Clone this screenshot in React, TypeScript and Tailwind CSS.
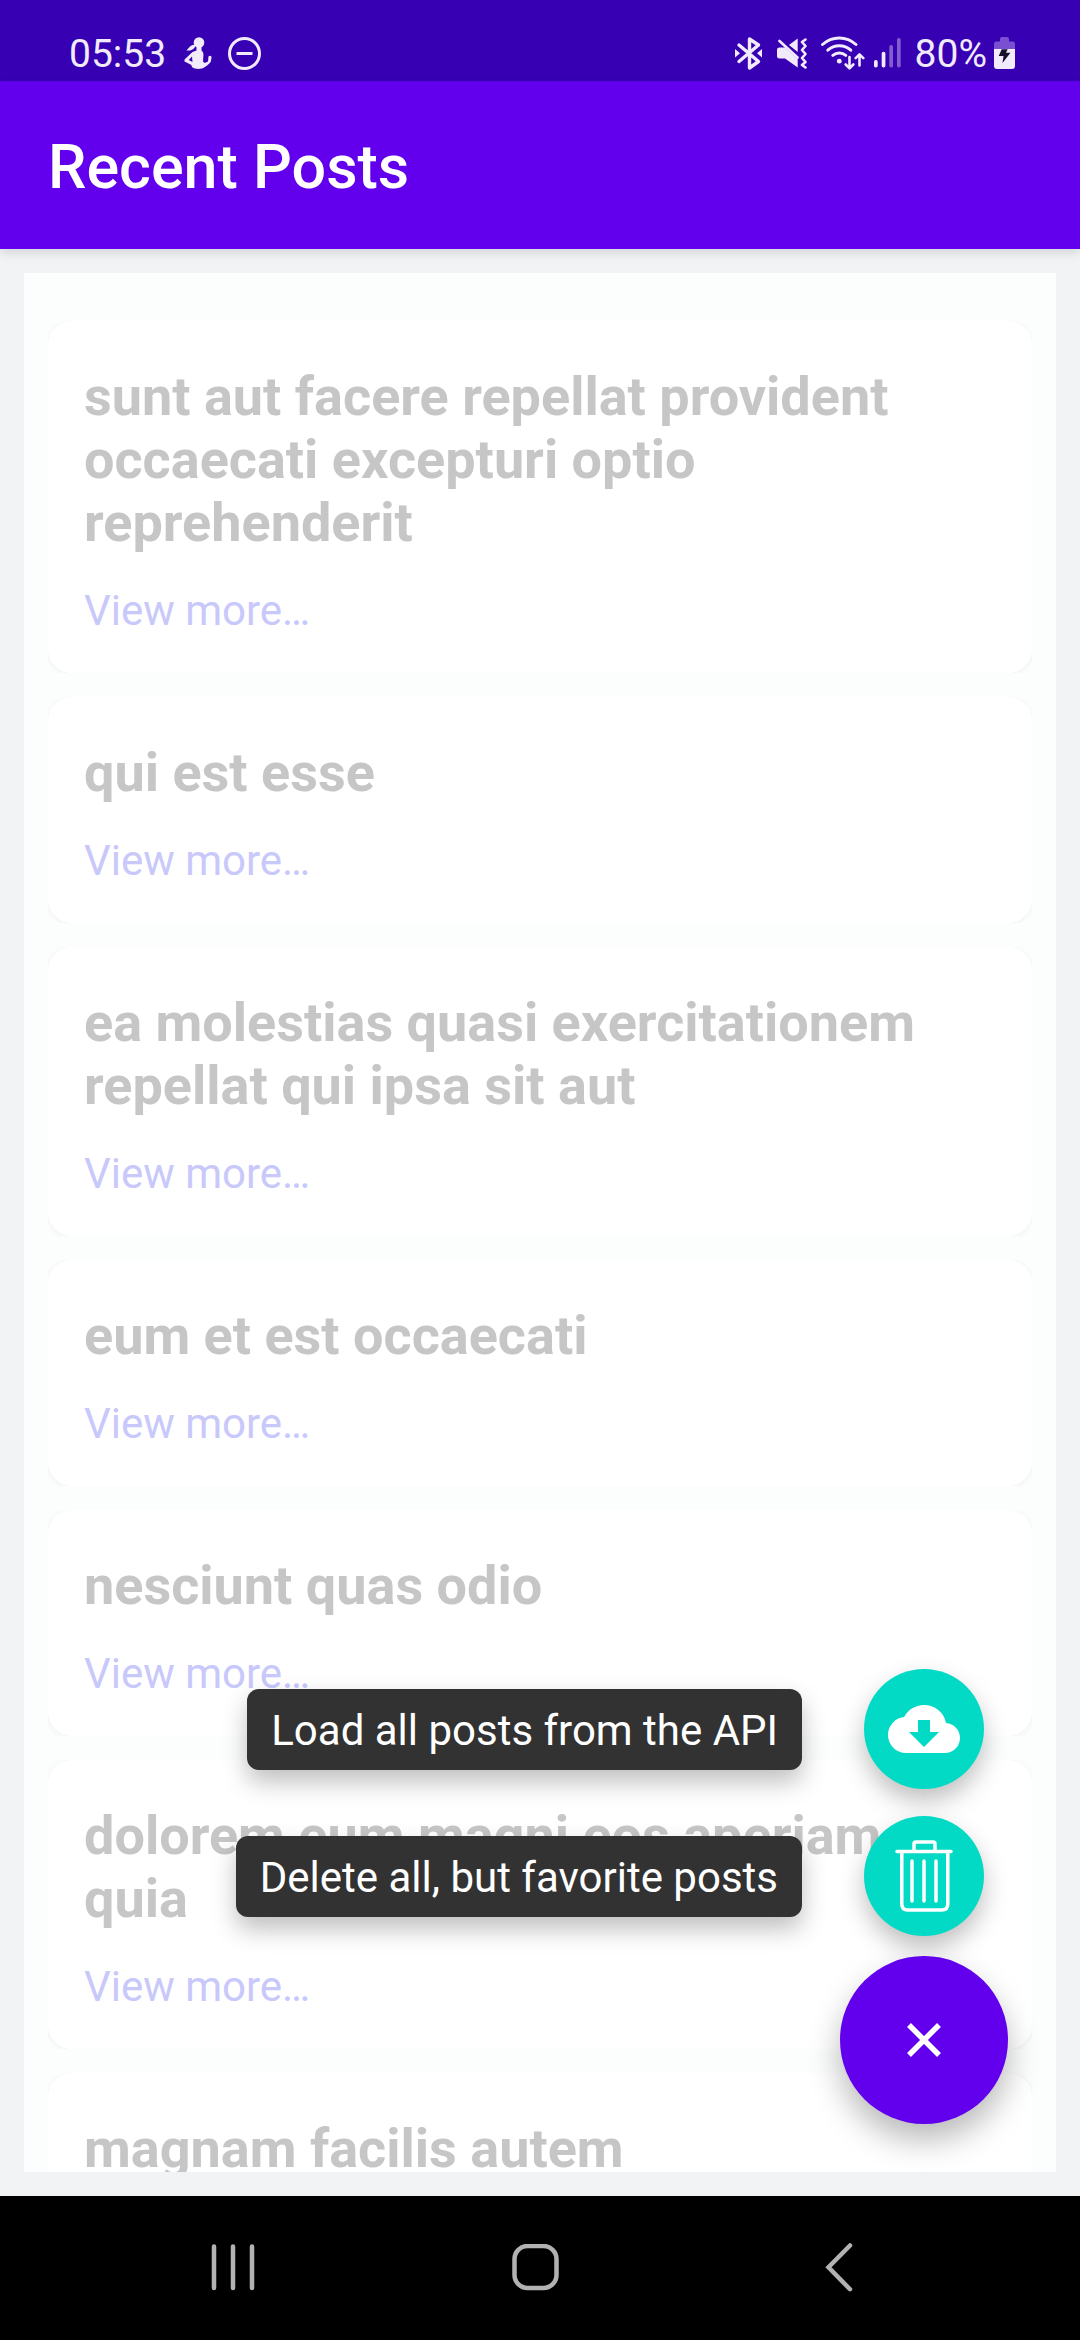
import type { ReactNode } from "react";

const posts = [
  "sunt aut facere repellat provident occaecati excepturi optio reprehenderit",
  "qui est esse",
  "ea molestias quasi exercitationem repellat qui ipsa sit aut",
  "eum et est occaecati",
  "nesciunt quas odio",
  "dolorem eum magni eos aperiam quia",
  "magnam facilis autem",
];

function StatusBar() {
  return (
    <div className="flex h-[81px] shrink-0 items-end justify-between bg-[#3700b3] pr-[65px] pb-[5px] pl-[69px] text-[39px] leading-[44px] text-[#f1ebfb]">
      <div className="flex items-center">
        <span>05:53</span>
        <svg className="ml-[18px] h-9 w-7" viewBox="0 0 28 36" fill="currentColor" aria-hidden="true">
          <circle cx="15" cy="6.500" r="5.300" />
          <path d="M11 8.500C7.500 8.700 5.500 10.500 2.500 14.500c3.500.5 6.500-.5 8.500-3.500z" />
          <path
            fillRule="evenodd"
            d="M12.500 10h5v4.500c1.800 1.300 2.300 3.500 1.800 6.500l-.3 4.500 1.800 1.500 3.200-1.500.5-5c1.500-1.500 3.300-.5 3 1.500l-.8 4c-1.700 2.300-4.200 4-6.200 5.200-2.500 2.200-9.500 2.200-12 .3l-1.500-2.800L.5 25.500v-2l8-7.500 4-1.500zM8 20.500L4.800 24l3.700 2z"
          />
        </svg>
        <svg className="ml-4 h-9 w-[34px]" viewBox="0 0 34 36" fill="none" stroke="currentColor" strokeWidth="3" aria-hidden="true">
          <circle cx="16.500" cy="17.500" r="15" />
          <path d="M8.500 17.500h16" />
        </svg>
      </div>
      <div className="flex items-center">
        <svg className="h-9 w-7" viewBox="0 0 28 36" fill="none" stroke="currentColor" strokeWidth="3.400" strokeLinejoin="round" strokeLinecap="round" aria-hidden="true">
          <path d="M4 9l19.500 16.500-9 6.500V3l9 6L4 25.500" />
          <path d="M0 13l5 4.200L0 21.500zM27 13l-5 4.200 5 4.300z" fill="currentColor" stroke="none" />
        </svg>
        <svg className="ml-3.5 h-9 w-[30px]" viewBox="0 0 30 36" fill="currentColor" aria-hidden="true">
          <path d="M2.500 11.500H8L20.700 23v8.500L8 22.500H2.500Q0 22.500 0 20.500v-7q0-2 2.500-2zM20.700 2.500V16L12 9z" />
          <path
            d="M2.500 5L20.500 21.500M28.500 3.500L25 6l3.500 4-3.500 4 3.500 4-3.500 4 3.500 4-3.500 3 3.500 2.500"
            fill="none"
            stroke="currentColor"
            strokeWidth="2.600"
            strokeLinecap="round"
            strokeLinejoin="round"
          />
        </svg>
        <svg className="ml-[13px] h-9 w-[45px]" viewBox="0 0 45 36" fill="none" stroke="currentColor" strokeWidth="3" strokeLinecap="round" strokeLinejoin="round" aria-hidden="true">
          <path d="M2.500 8.500C12-.3 26.500-.3 36 8.500M7.800 14.200c6.500-6 16.500-6 23 0M12.800 19.300c3.800-3.200 9.200-3.200 13 0" />
          <circle cx="19.300" cy="25.200" r="2.400" fill="currentColor" stroke="none" />
          <path d="M29.500 21v11M25.700 28.500l3.800 3.800 3.800-3.800M39.500 29.500v-11M35.700 22.200l3.800-3.800 3.800 3.800" strokeWidth="2.600" />
        </svg>
        <svg className="ml-[9px] h-9 w-[27px]" viewBox="0 0 27 36" fill="currentColor" aria-hidden="true">
          <rect x="0" y="24" width="3.700" height="7.500" rx="1.700" />
          <rect x="7.700" y="15.700" width="3.700" height="15.800" rx="1.700" />
          <rect x="15.300" y="9" width="3.700" height="22.500" rx="1.700" opacity=".4" />
          <rect x="23" y="2" width="3.700" height="29.500" rx="1.700" opacity=".4" />
        </svg>
        <span className="ml-3.5">80%</span>
        <svg className="ml-[7px] h-9 w-[21px]" viewBox="0 0 21 36" aria-hidden="true">
          <path d="M6 3q0-2 2-2h5q2 0 2 2v2.500h3.500q2.500 0 2.500 2.500v6H0V8q0-2.500 2.500-2.500H6z" fill="#7a4fd0" />
          <path d="M0 13h21v17q0 3-3 3H3q-3 0-3-3z" fill="currentColor" />
          <path d="M7.700 13.200h6L12 16.700h4.500L8.500 27l1-7H4.700z" fill="#17122b" />
        </svg>
      </div>
    </div>
  );
}

function PostCard({ title }: { title: string }) {
  return (
    <li className="shrink-0 overflow-hidden">
      <article className="rounded-3xl bg-white px-9 pt-11 pb-[38px] shadow-[0_1px_6px_rgba(0,0,0,0.06)]">
        <h2 className="text-[54px] leading-[63px] font-bold text-[#c6c6c6]">{title}</h2>
        <a href="#post" className="mt-8 block text-[42px] leading-[49px] text-[#c8c8fb]">
          View more…
        </a>
      </article>
    </li>
  );
}

function Action({ label, children }: { label: string; children: ReactNode }) {
  return (
    <button type="button" className="mr-6 flex items-center gap-[62px]">
      <span className="rounded-xl bg-[#323232] px-6 pt-[17px] pb-[15px] text-[42px] leading-[49px] text-white shadow-[0_12px_24px_rgba(0,0,0,0.25)]">
        {label}
      </span>
      <span className="flex size-[120px] items-center justify-center rounded-full bg-[#03dac5] text-white shadow-[0_12px_24px_rgba(0,0,0,0.25)]">
        {children}
      </span>
    </button>
  );
}

export default function App() {
  return (
    <div className="flex h-screen flex-col bg-[#f2f3f5] font-['Roboto',sans-serif]">
      <StatusBar />
      <header className="z-10 flex h-[168px] shrink-0 items-center bg-[#6200ee] px-12 pt-1 shadow-[0_4px_10px_rgba(0,0,0,0.12)]">
        <h1 className="text-[61px] leading-[70px] font-medium text-white">Recent Posts</h1>
      </header>
      <main className="relative min-h-0 flex-1 p-6">
        <ul className="flex h-full flex-col gap-6 overflow-hidden bg-[#fcfefd] px-6 pt-12">
          {posts.map((title) => (
            <PostCard key={title} title={title} />
          ))}
        </ul>
        <div className="absolute right-[72px] bottom-[72px] flex flex-col items-end">
          <Action label="Load all posts from the API">
            <svg className="size-[72px]" viewBox="0 0 24 24" fill="currentColor" aria-hidden="true">
              <path d="M19.35 10.04A7.49 7.49 0 0 0 12 4C9.11 4 6.6 5.64 5.35 8.04A5.994 5.994 0 0 0 0 14c0 3.31 2.69 6 6 6h13c2.76 0 5-2.24 5-5 0-2.64-2.05-4.78-4.65-4.96zM17 13l-5 5-5-5h3V9h4v4h3z" />
            </svg>
          </Action>
          <div className="mt-[27px] mb-5">
            <Action label="Delete all, but favorite posts">
              <svg className="size-[72px]" viewBox="0 0 72 72" fill="none" stroke="currentColor" strokeWidth="3.500" strokeLinecap="round" strokeLinejoin="round" aria-hidden="true">
                <path d="M9 11.500h54M26 11V4q0-2 2-2h17q2 0 2 2v7" />
                <path d="M13.800 12v52q0 6 6 6h34q6 0 6-6V12M24 21v40M36 21v40M48 21v40" />
              </svg>
            </Action>
          </div>
          <button type="button" aria-label="Close menu" className="flex size-[168px] items-center justify-center rounded-full bg-[#6200ee] text-white shadow-[0_16px_32px_rgba(0,0,0,0.28)]">
            <svg className="size-9" viewBox="0 0 36 36" stroke="currentColor" strokeWidth="5.500" aria-hidden="true">
              <path d="M3 3l30 30M33 3L3 33" />
            </svg>
          </button>
        </div>
      </main>
      <nav className="grid h-36 shrink-0 grid-cols-3 place-items-center bg-black pr-[90px] pl-[82px] text-[#b2b2b2]">
        <button type="button" aria-label="Recent apps">
          <svg className="size-12" viewBox="0 0 48 48" stroke="currentColor" strokeWidth="4.500" strokeLinecap="round" aria-hidden="true">
            <path d="M5 2.500v41.500M24 2.500v41.500M43 2.500v41.500" />
          </svg>
        </button>
        <button type="button" aria-label="Home">
          <svg className="size-12" viewBox="0 0 48 48" fill="none" stroke="currentColor" strokeWidth="4.500" aria-hidden="true">
            <rect x="2.500" y="2" width="42" height="42" rx="13" />
          </svg>
        </button>
        <button type="button" aria-label="Back">
          <svg className="size-12 overflow-visible" viewBox="0 0 48 48" fill="none" stroke="currentColor" strokeWidth="4.500" strokeLinecap="round" aria-hidden="true">
            <path d="M35 1.500L13.500 23.200l21.500 22" />
          </svg>
        </button>
      </nav>
    </div>
  );
}
